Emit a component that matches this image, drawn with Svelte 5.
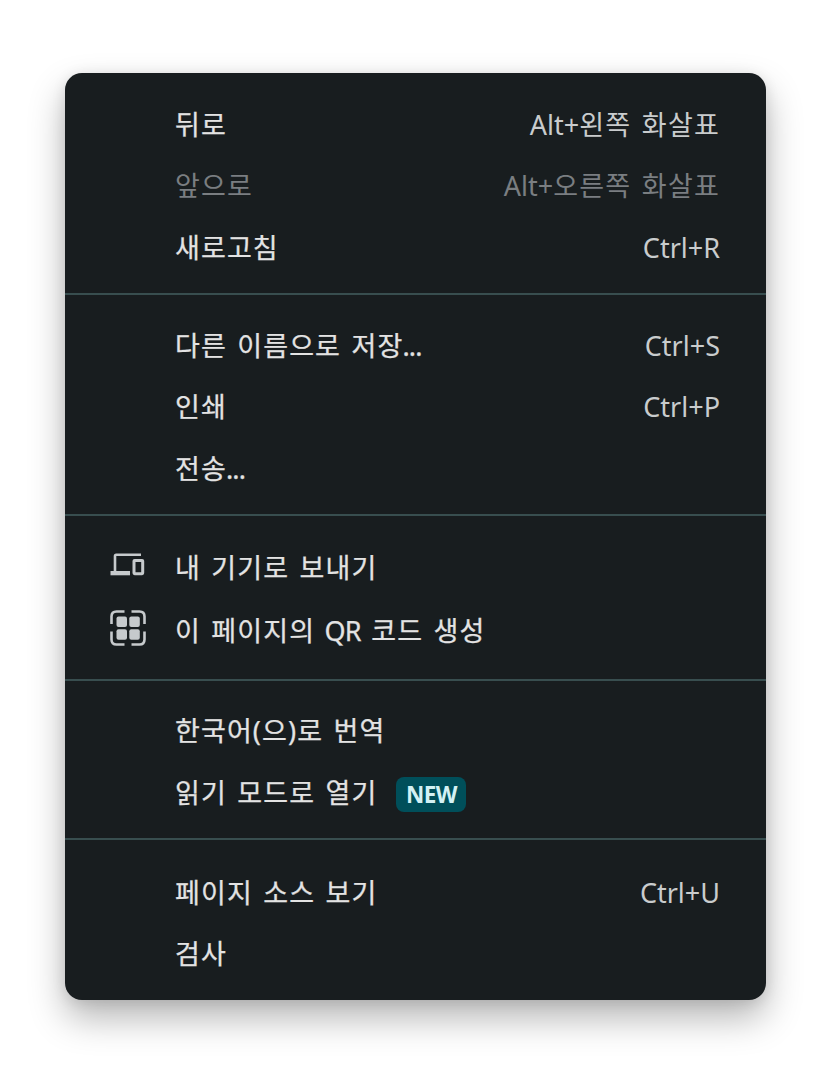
<script lang="ts">
    type Item = {
        label: string;
        shortcut?: string;
        icon?: "devices" | "qr";
        badge?: string;
        disabled?: boolean;
    };

    const groups: { name: string; items: Item[] }[] = [
        {
            name: "navigation",
            items: [
                { label: "뒤로", shortcut: "Alt+왼쪽 화살표" },
                { label: "앞으로", shortcut: "Alt+오른쪽 화살표", disabled: true },
                { label: "새로고침", shortcut: "Ctrl+R" },
            ],
        },
        {
            name: "output",
            items: [
                { label: "다른 이름으로 저장...", shortcut: "Ctrl+S" },
                { label: "인쇄", shortcut: "Ctrl+P" },
                { label: "전송..." },
            ],
        },
        {
            name: "share",
            items: [
                { label: "내 기기로 보내기", icon: "devices" },
                { label: "이 페이지의 QR 코드 생성", icon: "qr" },
            ],
        },
        {
            name: "reading",
            items: [
                { label: "한국어(으)로 번역" },
                { label: "읽기 모드로 열기", badge: "NEW" },
            ],
        },
        {
            name: "developer",
            items: [
                { label: "페이지 소스 보기", shortcut: "Ctrl+U" },
                { label: "검사" },
            ],
        },
    ];

    // Latin runs are tracked tighter than Hangul, so they get their own span
    function splitRuns(text: string) {
        return text
            .split(/([A-Za-z+.]+)/)
            .filter(Boolean)
            .map((run) => ({ run, latin: /^[A-Za-z+.]/.test(run) }));
    }
</script>

{#snippet runs(text: string)}
    {#each splitRuns(text) as part}<span class:latin={part.latin}>{part.run}</span>{/each}
{/snippet}

<main>
    <div class="menu" role="menu">
        {#each groups as group}
            <div class="group {group.name}" role="group">
                {#each group.items as item}
                    <button class="item" role="menuitem" disabled={item.disabled}>
                        <span class="icon">
                            {#if item.icon === "devices"}
                                <svg width="36" height="26" viewBox="0 0 36 26">
                                    <path d="M31 2.7H6.2Q5 2.7 5 3.9V20" fill="none" stroke="currentColor" stroke-width="2.6" />
                                    <path d="M0.5 19h19.5v4.300H0.5z" fill="currentColor" />
                                    <rect x="24" y="8.5" width="8.7" height="13.2" rx="0.6" fill="none" stroke="currentColor" stroke-width="3" />
                                </svg>
                            {:else if item.icon === "qr"}
                                <svg width="36" height="36" viewBox="0 0 36 36">
                                    <path
                                        d="M1.5 14V6.5q0-5 5-5H14.5M21.5 1.5h8q5 0 5 5V14M34.5 21.5v8q0 5-5 5H21.5M14.5 34.5H6.5q-5 0-5-5V21.5"
                                        fill="none"
                                        stroke="currentColor"
                                        stroke-width="2.6"
                                    />
                                    <g fill="currentColor">
                                        <rect x="6.5" y="6.5" width="10.5" height="10.5" rx="2" />
                                        <rect x="19.3" y="6.5" width="10.5" height="10.5" rx="2" />
                                        <rect x="6.5" y="19.3" width="10.5" height="10.5" rx="2" />
                                        <rect x="19.3" y="19.3" width="10.5" height="10.5" rx="2" />
                                    </g>
                                </svg>
                            {/if}
                        </span>
                        <span class="label">{@render runs(item.label)}</span>
                        {#if item.badge}
                            <span class="badge">{item.badge}</span>
                        {/if}
                        {#if item.shortcut}
                            <span class="shortcut">{@render runs(item.shortcut)}</span>
                        {/if}
                    </button>
                {/each}
            </div>
        {/each}
    </div>
</main>

<style>
    :global(body) {
        margin: 0;
        background: #fff;
    }

    main {
        box-sizing: border-box;
        min-height: 1080px;
        padding: 73px 0 0 65px;
    }

    .menu {
        box-sizing: border-box;
        width: 701px;
        height: 927px;
        border-radius: 17px;
        background: #181d1f;
        box-shadow: 0 18px 36px rgba(0, 0, 0, 0.29), 0 2px 14px rgba(0, 0, 0, 0.1);
        font-family: "Noto Sans", "Noto Sans CJK KR", sans-serif;
        font-size: 27px;
    }

    .group {
        display: flow-root;
        padding: 20px 0 14.5px;
    }

    .group + .group {
        border-top: 2px solid #384e4f;
    }

    .navigation {
        padding-top: 21px;
    }

    .share {
        padding-bottom: 17px;
    }

    .share .item {
        height: 63px;
    }

    .reading {
        padding-top: 19.5px;
    }

    .developer {
        padding-top: 22px;
    }

    .item {
        display: flex;
        align-items: center;
        box-sizing: border-box;
        width: 100%;
        height: 61.5px;
        padding: 0 46px 0 45px;
        border: none;
        background: none;
        color: #e3e3e3;
        font: inherit;
        line-height: 36px;
        white-space: nowrap;
    }

    .item:disabled {
        color: #7a7e81;
    }

    .icon {
        flex: none;
        width: 65px;
        padding-bottom: 6px;
        color: #c6cacc;
    }

    .icon svg {
        display: block;
    }

    .label,
    .shortcut {
        letter-spacing: 1.1px;
        word-spacing: 2.3px;
    }

    .item:enabled .label {
        -webkit-text-stroke: 0.25px currentColor;
    }

    .label .latin {
        margin-left: -1px;
        letter-spacing: -0.8px;
    }

    .shortcut {
        margin-left: auto;
        color: #c9cccd;
        letter-spacing: 1.2px;
    }

    .shortcut .latin {
        letter-spacing: 0;
    }

    .item:disabled .shortcut {
        color: inherit;
    }

    .badge {
        box-sizing: border-box;
        width: 70px;
        height: 35px;
        margin: 3px 0 0 19px;
        border-radius: 8px;
        background: #004f5a;
        color: #d3f1f4;
        font-size: 22.5px;
        font-weight: 700;
        letter-spacing: -0.6px;
        line-height: 36px;
        text-align: center;
    }
</style>
